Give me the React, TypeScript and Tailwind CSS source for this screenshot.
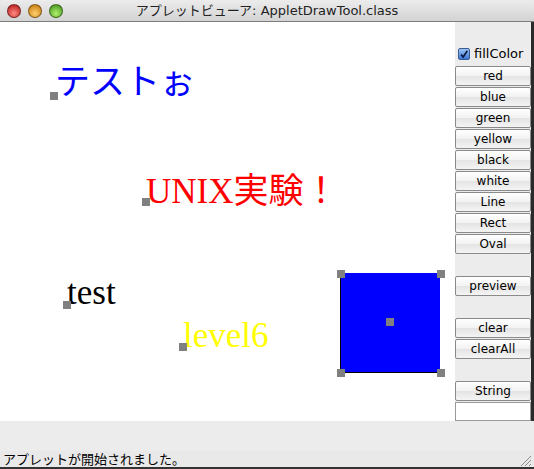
import React from 'react';

const jp = "font-['Lucida_Grande','DejaVu_Sans','Noto_Sans_CJK_JP',sans-serif]";
const serif = "font-['Liberation_Serif','Noto_Sans_CJK_JP',serif]";

const buttons = [
  ['red', 'blue', 'green', 'yellow', 'black', 'white', 'Line', 'Rect', 'Oval'],
  ['preview'],
  ['clear', 'clearAll'],
  ['String'],
];

// ─── 描画済みの図形（キャンバス上の自由配置）───
const Handle: React.FC<{ x: number; y: number }> = ({ x, y }) => (
  <div className="absolute h-2 w-2 bg-[#808080]" style={{ left: x, top: y }} />
);

const AquaButton: React.FC<{ label: string }> = ({ label }) => (
  <button
    className={`h-5 w-[76px] rounded-[2px] border border-[#8a8a8a] bg-[linear-gradient(#ffffff,#f2f2f2_50%,#e4e4e4_51%,#f4f4f4)] text-[12px] leading-[18px] text-black ${jp}`}
  >
    {label}
  </button>
);

const Light: React.FC<{ from: string; to: string }> = ({ from, to }) => (
  <div
    className="h-[14px] w-[14px] rounded-full border border-black/40"
    style={{ background: `radial-gradient(circle at 50% 70%, ${to}, ${from})` }}
  />
);

export default function App() {
  return (
    <div className="flex h-[469px] w-[534px] flex-col overflow-hidden bg-[#e9e9e9]">
      {/* タイトルバー */}
      <div className="relative flex h-[22px] shrink-0 items-center rounded-t-[5px] border-b border-[#7c7c7c] bg-[linear-gradient(#ececec,#d3d3d3)]">
        <div className="flex items-center gap-[7px] pl-[7px]">
          <Light from="#b01010" to="#ff8a80" />
          <Light from="#c07000" to="#ffd070" />
          <Light from="#3a8a10" to="#b0f070" />
        </div>
        <div className={`absolute inset-x-0 text-center text-[13px] text-[#222] ${jp}`}>
          アプレットビューア: AppletDrawTool.class
        </div>
      </div>

      <div className="flex h-[399px] shrink-0">
        {/* キャンバス */}
        <div className="relative w-[455px] shrink-0 bg-white">
          <div className={`absolute left-[55px] top-[43px] text-[35px] leading-none text-[#0000ff] ${serif}`}>
            テストぉ
          </div>
          <Handle x={50} y={70} />

          <div className={`absolute left-[146px] top-[152px] text-[35px] leading-none text-[#ff0000] ${serif}`}>
            UNIX実験！
          </div>
          <Handle x={142} y={176} />

          <div className={`absolute left-[67px] top-[253px] text-[35px] leading-none text-black ${serif}`}>
            test
          </div>
          <Handle x={63} y={279} />

          <div className={`absolute left-[183px] top-[296px] text-[35px] leading-none text-[#ffff00] ${serif}`}>
            level6
          </div>
          <Handle x={179} y={321} />

          <div className="absolute left-[340px] top-[251px] h-[100px] w-[100px] border-b border-l border-black bg-[#0000ff]" />
          <Handle x={337} y={248} />
          <Handle x={437} y={248} />
          <Handle x={337} y={347} />
          <Handle x={437} y={347} />
          <Handle x={386} y={296} />
        </div>

        {/* 操作パネル */}
        <div className="flex flex-1 flex-col border-r-[3px] border-[#2a2a2a] bg-[#ececec]">
          <label className={`mt-[25px] flex h-[14px] items-center gap-[4px] pl-[3px] text-[13px] text-black ${jp}`}>
            <span className="flex h-[12px] w-[12px] items-center justify-center rounded-[2px] border border-[#3a5a90] bg-[linear-gradient(#9cc4f4,#3c78d8)]">
              <svg viewBox="0 0 12 12" className="h-[11px] w-[11px]">
                <path d="M2.5 6 L5 9 L10 1.5" fill="none" stroke="#0a1a40" strokeWidth="2" />
              </svg>
            </span>
            fillColor
          </label>
          <div className="mt-[5px] flex flex-col gap-[22px]">
            {buttons.map((group, i) => (
              <div key={i} className="flex flex-col gap-[1px]">
                {group.map((b) => (
                  <AquaButton key={b} label={b} />
                ))}
              </div>
            ))}
          </div>
          <div className="mt-[1px] h-[21px] w-[76px] border border-[#9a9a9a] bg-white" />
        </div>
      </div>

      <div className="h-[30px] shrink-0 bg-[#ececec]" />
      <div className={`relative flex h-[16px] shrink-0 items-center pl-[3px] text-[13px] leading-none text-black ${jp}`}>
        アプレットが開始されました。
        <svg viewBox="0 0 14 14" className="absolute bottom-0 right-[2px] h-[14px] w-[14px]">
          <path d="M13 3 L3 13 M13 7 L7 13 M13 11 L11 13" stroke="#8a8a8a" strokeWidth="1" />
        </svg>
      </div>
      <div className="h-[2px] shrink-0 bg-[#333]" />
    </div>
  );
}
